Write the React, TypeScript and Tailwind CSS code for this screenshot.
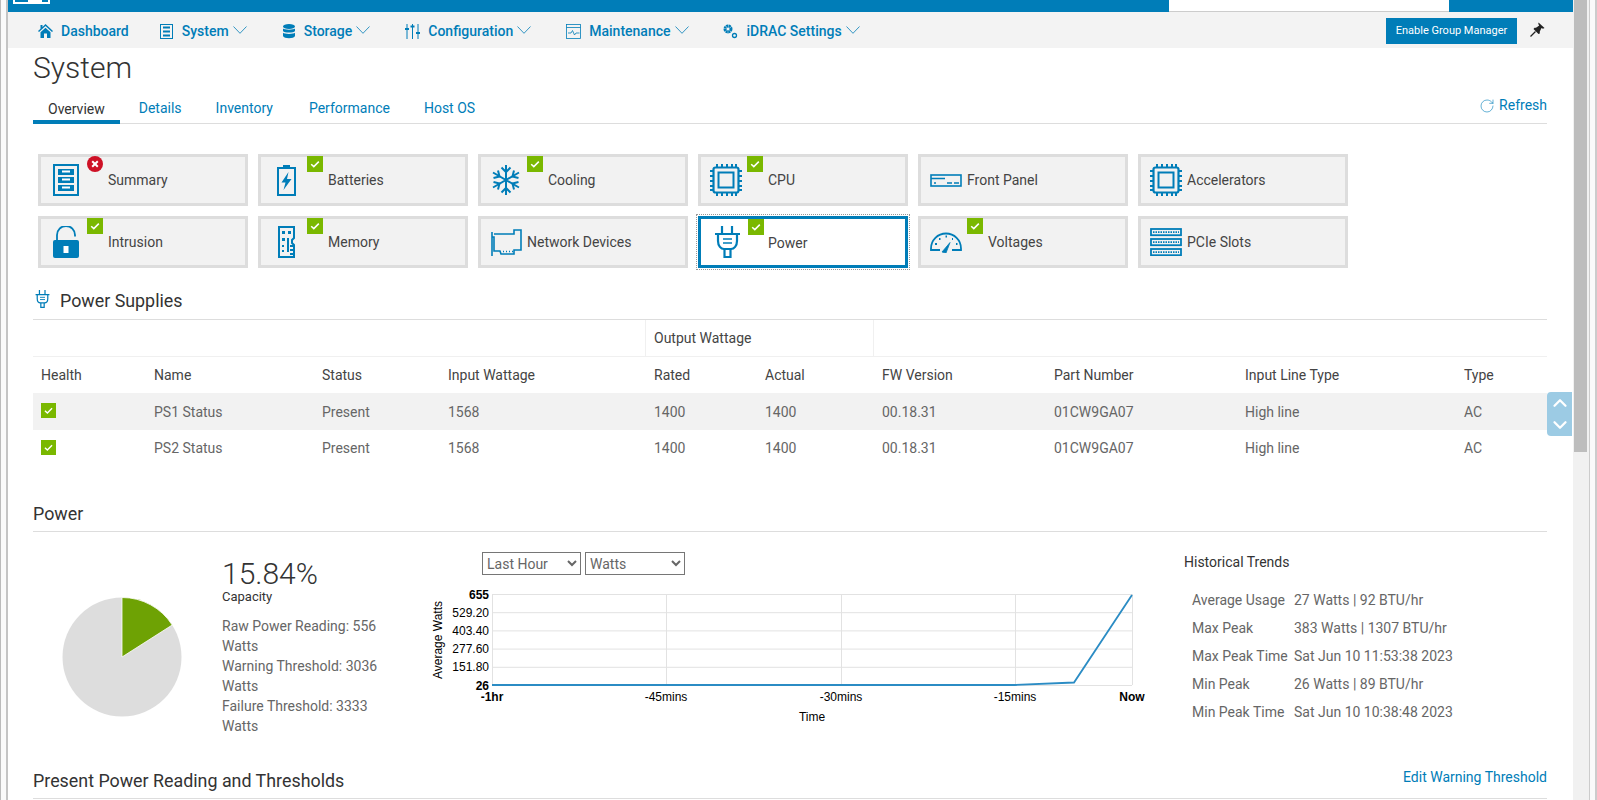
import { ChevronDown, ChevronUp, RotateCw } from 'lucide-react';
import type { ReactNode } from 'react';

const BLUE = '#007db8';

function Check({ className = '' }: { className?: string }) {
  return (
    <svg viewBox="0 0 16 16" className={`w-4 h-4 ${className}`}>
      <rect width="16" height="16" fill="#7ab800" />
      <path d="M4.2 8.2l2.6 2.4 5-5" fill="none" stroke="#fff" strokeWidth="1.5" />
    </svg>
  );
}

function ErrorBadge({ className = '' }: { className?: string }) {
  return (
    <svg viewBox="0 0 16 16" className={`w-4 h-4 ${className}`}>
      <circle cx="8" cy="8" r="8" fill="#ce1126" />
      <path d="M5.2 5.2l5.6 5.6M10.8 5.2l-5.6 5.6" stroke="#fff" strokeWidth="2" />
    </svg>
  );
}

function NavChevron() {
  return (
    <svg viewBox="0 0 14 8" className="w-[14px] h-[8px] ml-[4px] -mt-[2px]" fill="none" stroke={BLUE} strokeWidth="0.800">
      <path d="M0.500 0.500L7 7.300 13.500 0.500" />
    </svg>
  );
}

function SummaryIcon() {
  return (
    <svg viewBox="0 0 26 32" className="w-[26px] h-[32px] ml-[12px]" fill="none" stroke={BLUE}>
      <rect x="1" y="1" width="24" height="30" strokeWidth="2" />
      <rect x="5" y="5" width="16" height="6" fill={BLUE} strokeWidth="0" />
      <rect x="5" y="13" width="16" height="6" fill={BLUE} strokeWidth="0" />
      <rect x="5" y="21" width="16" height="6" fill={BLUE} strokeWidth="0" />
      <path d="M9 7.500h8M9 15.500h8M9 23.500h8" stroke="#fff" strokeWidth="2" />
    </svg>
  );
}

function BatteryIcon() {
  return (
    <svg viewBox="0 0 19 32" className="w-[19px] h-[32px] ml-[16px]" fill="none" stroke={BLUE}>
      <path d="M6 1h7v3H6z" fill={BLUE} strokeWidth="0" />
      <rect x="1" y="4" width="17" height="27" strokeWidth="2" />
      <path d="M11.500 8l-7 10.500h4L6.500 26l8-11h-4.500z" fill={BLUE} strokeWidth="0" />
    </svg>
  );
}

function SnowIcon() {
  return (
    <svg viewBox="0 0 30 32" className="w-[30px] h-[32px] ml-[10px]" fill="none" stroke={BLUE} strokeWidth="2">
      <path d="M15 1v30M2 8.500l26 15M28 8.500l-26 15" />
      <path d="M10.500 3.500L15 8l4.500-4.500M10.500 28.500L15 24l4.500 4.500" />
      <path d="M2.500 14L8.500 12.500 7 6.500M27.500 14L21.500 12.500 23 6.500M2.500 18L8.500 19.500 7 25.500M27.500 18L21.500 19.500 23 25.500" />
    </svg>
  );
}

function ChipIcon() {
  return (
    <svg viewBox="0 0 32 32" className="w-[32px] h-[32px] ml-[9px]" fill="none" stroke={BLUE}>
      <rect x="3.500" y="3.500" width="25" height="25" rx="2" strokeWidth="2.200" />
      <rect x="8.500" y="8.500" width="15" height="15" strokeWidth="2" />
      <path d="M7 0v3M12 0v3M17 0v3M22 0v3M26 0v3M7 29v3M12 29v3M17 29v3M22 29v3M26 29v3M0 7h3M0 12h3M0 17h3M0 22h3M0 26h3M29 7h3M29 12h3M29 17h3M29 22h3M29 26h3" strokeWidth="2" />
    </svg>
  );
}

function FrontPanelIcon() {
  return (
    <svg viewBox="0 0 32 13" className="w-[32px] h-[13px] ml-[9px]" fill="none" stroke={BLUE}>
      <rect x="1" y="1" width="30" height="11" strokeWidth="1.600" />
      <path d="M1 4.500h14M4 9h2M17 9h5M24 9h5" strokeWidth="1.600" />
    </svg>
  );
}

function LockIcon() {
  return (
    <svg viewBox="0 0 26 32" className="w-[26px] h-[32px] ml-[12px]">
      <path d="M4 15V9a9 9 0 0 1 18 0v1.500" fill="none" stroke={BLUE} strokeWidth="1.800" />
      <rect y="14" width="26" height="18" rx="2" fill={BLUE} />
      <rect x="10.500" y="20" width="5" height="7" fill="#fff" />
    </svg>
  );
}

function MemoryIcon() {
  return (
    <svg viewBox="0 0 17 32" className="w-[17px] h-[32px] ml-[17px]" fill="none" stroke={BLUE}>
      <path d="M1 1h15v11l-2 2v3l2 2v12H1z" strokeWidth="2" />
      <path d="M4 5h3v3H4zM4 12h3v3H4zM10 5h3v3h-3zM9 12h2v14H9zM12 19h3v2h-3zM12 23h3v2h-3zM12 27h3v2h-3zM4 19h2v2H4zM4 24h2v2H4z" fill={BLUE} strokeWidth="0" />
    </svg>
  );
}

function NetworkIcon() {
  return (
    <svg viewBox="0 0 31 27" className="w-[31px] h-[27px] ml-[10px]" fill="none" stroke={BLUE}>
      <path d="M1 3v24" strokeWidth="1.600" />
      <path d="M1 8h2v14h6l1 3h13v-4h7V1h-7v4H3" strokeWidth="1.600" />
      <path d="M12 22.500h1M15 22.500h1M18 22.500h1M21 22.500h1" strokeWidth="1.600" />
    </svg>
  );
}

function PlugIcon({ className = 'w-[27px] h-[32px] ml-[13px]' }: { className?: string }) {
  return (
    <svg viewBox="0 0 27 32" className={className} fill="none" stroke={BLUE} strokeWidth="2.200">
      <path d="M8 0v8M18 0v8M1 8h25M4 8v7c0 5 3 8 6 8h7c3 0 6-3 6-8V8" />
      <path d="M10.500 23v8h6v-8" />
      <path d="M9 13h9M9 17h9" strokeWidth="1.600" />
    </svg>
  );
}

function GaugeIcon() {
  return (
    <svg viewBox="0 0 32 22" className="w-[32px] h-[22px] ml-[9px]" fill="none" stroke={BLUE}>
      <path d="M1 17.500a15 15 0 0 1 30 0v1.500h-9M1 17.500v1.500h9" strokeWidth="1.800" />
      <path d="M12 21l8-9.500-4 10.500z" fill={BLUE} strokeWidth="0.800" />
      <path d="M5 13h2M9 8h1.500M15.500 5.500h1.500M22 8h1M26 13h1.500" strokeWidth="1.800" />
    </svg>
  );
}

function PcieIcon() {
  return (
    <svg viewBox="0 0 32 28" className="w-[32px] h-[28px] ml-[9px]" fill="none" stroke={BLUE}>
      {[0, 10, 20].map(y => (
        <g key={y}>
          <rect x="1" y={y + 1} width="30" height="6.200" strokeWidth="1.800" />
          <path d={`M3 ${y + 4.100}h26`} strokeWidth="1.800" strokeDasharray="1.500 1" />
        </g>
      ))}
    </svg>
  );
}

interface Tile {
  label: string;
  icon: ReactNode;
  badge?: 'ok' | 'error';
  selected?: boolean;
}

const tiles: Tile[] = [
  { label: 'Summary', icon: <SummaryIcon />, badge: 'error' },
  { label: 'Batteries', icon: <BatteryIcon />, badge: 'ok' },
  { label: 'Cooling', icon: <SnowIcon />, badge: 'ok' },
  { label: 'CPU', icon: <ChipIcon />, badge: 'ok' },
  { label: 'Front Panel', icon: <FrontPanelIcon /> },
  { label: 'Accelerators', icon: <ChipIcon /> },
  { label: 'Intrusion', icon: <LockIcon />, badge: 'ok' },
  { label: 'Memory', icon: <MemoryIcon />, badge: 'ok' },
  { label: 'Network Devices', icon: <NetworkIcon /> },
  { label: 'Power', icon: <PlugIcon />, badge: 'ok', selected: true },
  { label: 'Voltages', icon: <GaugeIcon />, badge: 'ok' },
  { label: 'PCIe Slots', icon: <PcieIcon /> },
];

function TileCard({ label, icon, badge, selected }: Tile) {
  return (
    <div
      className={`relative h-[52px] flex items-center border-[3px] ${
        selected ? 'bg-white border-[#007db8] outline-1 outline-dotted outline-offset-1 outline-[#999]' : 'bg-[#f2f2f2] border-[#dddddd]'
      }`}
    >
      <div className={`shrink-0 ${badge ? 'w-[67px]' : 'w-[46px]'}`}>{icon}</div>
      <span className={`text-[14px] text-[#444] ${selected ? 'pt-[2px]' : ''}`}>{label}</span>
      {badge === 'ok' && <Check className={selected ? 'absolute left-[47px] top-0' : 'absolute left-[46px] -top-px'} />}
      {badge === 'error' && <ErrorBadge className="absolute left-[46px] -top-px" />}
    </div>
  );
}

const navItems: { label: string; icon: ReactNode; menu?: boolean; gap: string; mr: string }[] = [
  {
    label: 'Dashboard',
    icon: (
      <svg viewBox="0 0 15 14" className="w-[15px] h-[14px]" fill={BLUE}>
        <path d="M7.500 0L15 7l-1 1-6.500-6L1 8 0 7l2.500-2.300V1H4.500v1.900z" />
        <path d="M2.500 8.300L7.500 3.700l5 4.600V14H9V9.500H6V14H2.500z" />
      </svg>
    ),
    gap: 'mr-[8px]',
    mr: 'mr-[31px]',
  },
  {
    label: 'System',
    icon: (
      <svg viewBox="0 0 13 15" className="w-[13px] h-[15px]" fill="none" stroke={BLUE}>
        <rect x="0.500" y="0.500" width="12" height="14" />
        <path d="M3 3.500h7M3 7.500h7M3 11.500h7" strokeWidth="2" />
      </svg>
    ),
    menu: true,
    gap: 'mr-[9px]',
    mr: 'mr-[36px]',
  },
  {
    label: 'Storage',
    icon: (
      <svg viewBox="0 0 12 15" className="w-[12px] h-[15px]" fill={BLUE}>
        <ellipse cx="6" cy="2.500" rx="6" ry="2.500" />
        <path d="M0 4.500c1 1.500 11 1.500 12 0V7c-1 2-11 2-12 0zM0 8.800c1 1.500 11 1.500 12 0v3.200c-1 3-11 3-12 0z" />
      </svg>
    ),
    menu: true,
    gap: 'mr-[9px]',
    mr: 'mr-[35px]',
  },
  {
    label: 'Configuration',
    icon: (
      <svg viewBox="0 0 15 15" className="w-[15px] h-[15px]" fill="none" stroke={BLUE}>
        <path d="M2 0v15M7.500 0v15M13 0v15" />
        <path d="M0 5h4M5.500 2.500h4M11 9h4" strokeWidth="2" />
      </svg>
    ),
    menu: true,
    gap: 'mr-[8px]',
    mr: 'mr-[35px]',
  },
  {
    label: 'Maintenance',
    icon: (
      <svg viewBox="0 0 15 15" className="w-[15px] h-[15px]" fill="none" stroke={BLUE} strokeWidth="0.800">
        <rect x="0.500" y="0.500" width="14" height="14" />
        <path d="M0.500 3.500h14M2 9h3l1.500-2.500 2 4.500 1.500-2h3.500" />
      </svg>
    ),
    menu: true,
    gap: 'mr-[8px]',
    mr: 'mr-[34px]',
  },
  {
    label: 'iDRAC Settings',
    icon: (
      <svg viewBox="0 0 15 15" className="w-[15px] h-[15px]" fill="none" stroke={BLUE}>
        <circle cx="5" cy="5" r="3" strokeWidth="3" strokeDasharray="2 0.400" />
        <circle cx="11.500" cy="11.500" r="2" strokeWidth="1.300" />
      </svg>
    ),
    menu: true,
    gap: 'mr-[9px]',
    mr: '',
  },
];

const tabs = ['Overview', 'Details', 'Inventory', 'Performance', 'Host OS'];

const supplyColumns = ['Health', 'Name', 'Status', 'Input Wattage', 'Rated', 'Actual', 'FW Version', 'Part Number', 'Input Line Type', 'Type'];

const supplies = [
  ['PS1 Status', 'Present', '1568', '1400', '1400', '00.18.31', '01CW9GA07', 'High line', 'AC'],
  ['PS2 Status', 'Present', '1568', '1400', '1400', '00.18.31', '01CW9GA07', 'High line', 'AC'],
];

const trends = [
  ['Average Usage', '27 Watts | 92 BTU/hr'],
  ['Max Peak', '383 Watts | 1307 BTU/hr'],
  ['Max Peak Time', 'Sat Jun 10 11:53:38 2023'],
  ['Min Peak', '26 Watts | 89 BTU/hr'],
  ['Min Peak Time', 'Sat Jun 10 10:38:48 2023'],
];

const rowGrid = 'grid grid-cols-[113px_168px_126px_206px_111px_117px_172px_191px_219px_91px] items-center text-[14px]';

function PowerChart() {
  const yLabels = ['655', '529.20', '403.40', '277.60', '151.80', '26'];
  const xTicks: [number, string][] = [[72, '-1hr'], [246, '-45mins'], [421, '-30mins'], [595, '-15mins'], [712, 'Now']];
  return (
    <svg viewBox="0 0 740 150" className="w-[740px] h-[150px] mt-[5px]" fontFamily="'Liberation Sans', sans-serif" fontSize="12" fill="#000">
      {yLabels.map((_, i) => (
        <line key={i} x1="72" x2="712" y1={14.500 + i * 18.200} y2={14.500 + i * 18.200} stroke="#e2e2e2" />
      ))}
      {xTicks.map(([x]) => (
        <line key={x} x1={x + 0.500} x2={x + 0.500} y1="14" y2="105" stroke="#e2e2e2" />
      ))}
      <polyline points="72,105 595,105 654,102.500 712,15" fill="none" stroke="#2b8cc4" strokeWidth="1.800" />
      {yLabels.map((l, i) => (
        <text key={l} x="69" y={18.500 + i * 18.200} textAnchor="end" fontWeight={i === 0 || i === 5 ? 700 : 400}>{l}</text>
      ))}
      {xTicks.map(([x, l], i) => (
        <text key={l} x={x} y="121" textAnchor="middle" fontWeight={i === 0 || i === 4 ? 700 : 400}>{l}</text>
      ))}
      <text x="392" y="141" textAnchor="middle">Time</text>
      <text transform="translate(22 60) rotate(-90)" textAnchor="middle">Average Watts</text>
    </svg>
  );
}

export default function App() {
  return (
    <div className="h-[800px] w-[1597px] overflow-hidden flex bg-white font-['Roboto',sans-serif] text-[#444]">
      {/* window edge */}
      <div className="w-[8px] shrink-0 border-l border-r-2 border-l-[#bbb] border-r-[#c4c4c4] bg-[#fafafa]" />

      <div className="flex-1 min-w-0">
        <div className="h-[12px] bg-[#007db8] relative overflow-hidden">
          <div className="absolute left-[5px] -top-[3px] w-[37px] h-[7px] border-2 border-white" />
          <div className="absolute left-[20px] top-0 w-[14px] h-[2px] bg-white" />
          <div className="absolute left-[1161px] top-0 w-[280px] h-[12px] bg-white border-b border-[#cccccc]" />
        </div>

        <nav className="h-[36px] bg-[#f3f3f3] flex items-center pt-[2px] pl-[30px] pr-[28px]">
          {navItems.map(n => (
            <div key={n.label} className={`flex items-center text-[14px] font-medium text-[#007db8] ${n.mr}`}>
              <span className={n.gap}>{n.icon}</span>
              {n.label}
              {n.menu && <NavChevron />}
            </div>
          ))}
          <button className="ml-auto h-[26px] w-[131px] bg-[#007db8] text-white text-[11px]">Enable Group Manager</button>
          <svg viewBox="0 0 15 15" className="w-[15px] h-[15px] ml-[13px] -mt-[3px]" fill="#222">
            <path d="M8.500 0.500L14.500 6 13 6.800 11.500 6 9.800 9.500 9.800 11.500 8.500 12 3.500 7 4.500 5.700 6 5.700 9.200 3.500 8.300 2z" />
            <path d="M5.500 9.500L0.500 14.500" stroke="#222" strokeWidth="1.200" />
          </svg>
        </nav>

        <main className="relative ml-[25px] mr-[26px]">
          <h1 className="text-[30px] font-light leading-[40px] text-[#333]">System</h1>

          <div className="flex items-end h-[36px] border-b border-[#dddddd]">
            {tabs.map((t, i) => (
              <div
                key={t}
                className={
                  i === 0
                    ? 'h-[32px] px-[15px] mr-[19px] border-b-[4px] border-[#007db8] text-[14px] text-[#333] leading-[34px] -mb-px'
                    : `h-[32px] text-[14px] text-[#007db8] leading-[34px] ${i === 2 ? 'mr-[36px]' : 'mr-[34px]'}`
                }
              >
                {t}
              </div>
            ))}
            <div className="ml-auto mb-[7px] flex items-center text-[14px] text-[#007db8]">
              <RotateCw size={16} strokeWidth={0.900} className="mr-[4px]" />
              Refresh
            </div>
          </div>

          <div className="grid grid-cols-[repeat(6,210px)] gap-[10px] ml-[5px] mt-[30px]">
            {tiles.map(t => (
              <TileCard key={t.label} {...t} />
            ))}
          </div>

          <div className="mt-[13px] h-[39px] pt-[2px] flex items-center border-b border-[#dddddd]">
            <PlugIcon className="w-[15px] h-[18px] ml-[2px] mr-[10px] mb-[5px]" />
            <h2 className="text-[17.850px] text-[#333]">Power Supplies</h2>
          </div>

          <div className="relative">
            <div className="h-[37px] border-b border-[#f0f0f0] pl-[612px]">
              <div className="w-[229px] h-[36px] border-x border-[#f0f0f0] flex items-center pl-[8px] text-[14px]">Output Wattage</div>
            </div>
            <div className={`${rowGrid} h-[36px]`}>
              {supplyColumns.map(c => (
                <div key={c} className="pl-[8px]">{c}</div>
              ))}
            </div>
            {supplies.map((row, i) => (
              <div key={row[0]} className={`${rowGrid} text-[#666] ${i === 0 ? 'h-[37px] pt-[2px] bg-[#f2f2f2]' : 'h-[36px]'}`}>
                <div className="pl-[8px]"><Check className={`w-[15px] h-[15px] ${i === 0 ? '-translate-y-[2px]' : '-translate-y-px'}`} /></div>
                {row.map((v, j) => (
                  <div key={j} className="pl-[8px]">{v}</div>
                ))}
              </div>
            ))}
            <div className="absolute top-[72px] -right-[25px] w-[25px] h-[44px] rounded-l-[4px] bg-[#9ccbe4] flex flex-col items-center justify-between text-white">
              <ChevronUp size={22} strokeWidth={2.500} />
              <ChevronDown size={22} strokeWidth={2.500} />
            </div>
          </div>

          <div className="mt-[30px] h-[36px] pt-[2px] flex items-center border-b border-[#dddddd]">
            <h2 className="text-[17.850px] text-[#333]">Power</h2>
          </div>

          <div className="flex h-[231px]">
            <div className="w-[189px] shrink-0 pl-[29px] pt-[65px]">
              <svg viewBox="0 0 120 120" className="w-[120px] h-[120px]">
                <circle cx="60" cy="60" r="59.500" fill="#dddddd" />
                <path d="M60 60V0.500A59.500 59.500 0 0 1 110.200 28z" fill="#6ea204" stroke="#fff" strokeWidth="0.800" />
              </svg>
            </div>
            <div className="w-[198px] shrink-0 pr-[33px] pt-[25px]">
              <div className="text-[30px] font-light leading-[33px] text-[#333]">15.84%</div>
              <div className="text-[13px] leading-[14px] text-[#333]">Capacity</div>
              <div className="mt-[12px] text-[14px] leading-[20px] text-[#666]">
                <div>Raw Power Reading: 556 Watts</div>
                <div>Warning Threshold: 3036 Watts</div>
                <div>Failure Threshold: 3333 Watts</div>
              </div>
            </div>
            <div className="w-[740px] shrink-0 pt-[20px]">
              <div className="flex gap-[4px] ml-[62px]">
                <select className="w-[99px] h-[23px] border border-[#767676] text-[14px] text-[#666]">
                  <option>Last Hour</option>
                </select>
                <select className="w-[100px] h-[23px] border border-[#767676] text-[14px] text-[#666]">
                  <option>Watts</option>
                </select>
              </div>
              <PowerChart />
            </div>
            <div className="pl-[24px] pt-[20px] text-[14px]">
              <div className="leading-[20px] text-[#333]">Historical Trends</div>
              <div className="mt-[14px] ml-[8px] text-[#666]">
                {trends.map(([k, v]) => (
                  <div key={k} className="flex h-[28px] items-center whitespace-nowrap">
                    <span className="w-[102px]">{k}</span>
                    <span>{v}</span>
                  </div>
                ))}
              </div>
            </div>
          </div>

          <div className="h-[36px] pt-[2px] flex items-center justify-between border-b border-[#dddddd]">
            <h2 className="text-[17.850px] text-[#333]">Present Power Reading and Thresholds</h2>
            <span className="text-[14px] text-[#007db8] mb-[8px]">Edit Warning Threshold</span>
          </div>
        </main>
      </div>

      {/* page scrollbar */}
      <div className="w-[16px] shrink-0 bg-[#f1f1f1]">
        <div className="ml-px w-[13px] h-[452px] bg-[#bdbdbd]" />
      </div>
      <div className="w-[8px] shrink-0 bg-[#fafafa] border-l border-r-2 border-l-[#cccccc] border-r-[#cccccc]" />
    </div>
  );
}
